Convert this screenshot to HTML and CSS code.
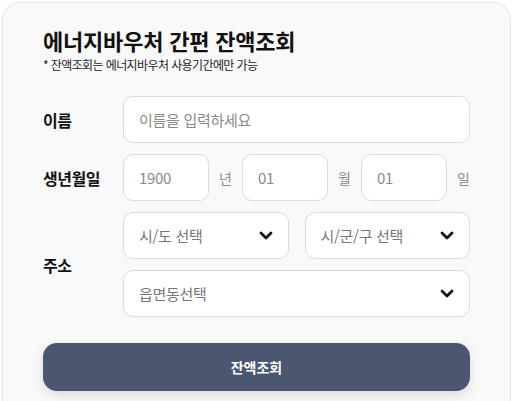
FILE: index.html
```html
<!DOCTYPE html>
<html lang="ko">
<head>
<meta charset="utf-8">
<title>에너지바우처 간편 잔액조회</title>
<link rel="stylesheet" href="styles.css">
</head>
<body>
<div class="card">
  <h1 class="title">에너지바우처 간편 잔액조회</h1>
  <p class="note">* 잔액조회는 에너지바우처 사용기간에만 가능</p>
  <form class="form">
    <div class="label">이름</div>
    <div class="field"><input class="input" type="text" placeholder="이름을 입력하세요"></div>

    <div class="label">생년월일</div>
    <div class="field birth">
      <input class="input" type="text" placeholder="1900">
      <span class="unit">년</span>
      <input class="input" type="text" placeholder="01">
      <span class="unit">월</span>
      <input class="input" type="text" placeholder="01">
      <span class="unit">일</span>
    </div>

    <div class="label">주소</div>
    <div class="field address">
      <div class="select"><span>시/도 선택</span><svg class="chev" viewBox="0 0 14 9" width="14" height="9"><path d="M2 2 L7 7 L12 2"/></svg></div>
      <div class="select"><span>시/군/구 선택</span><svg class="chev" viewBox="0 0 14 9" width="14" height="9"><path d="M2 2 L7 7 L12 2"/></svg></div>
      <div class="select wide"><span>읍면동선택</span><svg class="chev" viewBox="0 0 14 9" width="14" height="9"><path d="M2 2 L7 7 L12 2"/></svg></div>
    </div>
  </form>
  <button class="submit" type="button">잔액조회</button>
</div>
</body>
</html>
```

FILE: styles.css
```css
* { box-sizing: border-box; }
html, body { margin: 0; padding: 0; background: #ffffff; }
body {
  padding: 2px;
  font-family: "Noto Sans CJK KR", "Noto Sans", sans-serif;
  color: #111;
}
.card {
  border: 1px solid #e6e6e6;
  border-radius: 18px;
  background: #f9f9f9;
  padding: 21px 40px 40px 40px;
  min-height: 420px;
}
.title {
  margin: 0;
  font-size: 22px;
  line-height: 32px;
  font-weight: 700;
  letter-spacing: -0.2px;
  color: #111;
}
.note {
  margin: 0;
  font-size: 12px;
  line-height: 18px;
  letter-spacing: -0.6px;
  color: #222;
}
.form {
  margin-top: 22px;
  display: grid;
  grid-template-columns: 80px 1fr;
  row-gap: 11px;
  align-items: center;
}
.label {
  font-size: 16px;
  font-weight: 700;
  letter-spacing: -0.5px;
  color: #111;
}
.field { min-width: 0; }
.input {
  display: block;
  width: 100%;
  min-width: 0;
  height: 47px;
  border: 1px solid #dcdcdc;
  border-radius: 10px;
  background: #fff;
  padding: 0 15px;
  font-family: inherit;
  font-size: 15px;
  color: #333;
  outline: none;
}
.input::placeholder { color: #8a8a8a; letter-spacing: -0.3px; }
.birth {
  display: grid;
  grid-template-columns: 1fr auto 1fr auto 1fr auto;
  column-gap: 10px;
  align-items: center;
}
.unit {
  font-size: 14px;
  color: #8a8a8a;
}
.address {
  display: grid;
  grid-template-columns: 1fr 1fr;
  column-gap: 16px;
  row-gap: 11px;
}
.select {
  height: 47px;
  border: 1px solid #dcdcdc;
  border-radius: 10px;
  background: #fff;
  padding: 0 15px 0 15px;
  display: flex;
  align-items: center;
  justify-content: space-between;
  font-size: 15px;
  letter-spacing: -0.3px;
  color: #777;
}
.select.wide { grid-column: 1 / -1; }
.chev { display: block; }
.chev path {
  fill: none;
  stroke: #111;
  stroke-width: 2.8;
  stroke-linecap: round;
  stroke-linejoin: round;
}
.submit {
  display: block;
  width: 100%;
  height: 48px;
  margin-top: 26px;
  border: none;
  border-radius: 14px;
  background: #4b5671;
  color: #fff;
  font-family: inherit;
  font-size: 14px;
  font-weight: 700;
  box-shadow: 0 4px 12px rgba(0, 0, 0, 0.12);
}
```
